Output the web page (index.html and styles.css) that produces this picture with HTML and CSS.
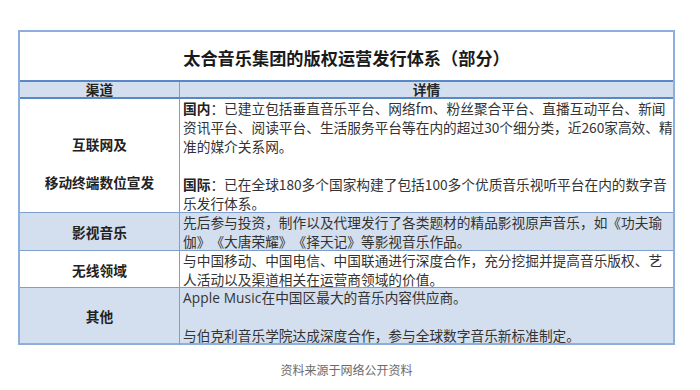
FILE: index.html
```html
<!DOCTYPE html>
<html lang="zh-CN">
<head>
<meta charset="utf-8">
<title>太合音乐集团的版权运营发行体系</title>
<link rel="stylesheet" href="styles.css">
</head>
<body>
<div class="page">
  <div class="sheet">
    <div class="title">太合音乐集团的版权运营发行体系（部分）</div>
    <div class="row head">
      <div class="c1">渠道</div>
      <div class="c2 center">详情</div>
    </div>
    <div class="row r1 white">
      <div class="c1 top">互联网及<br><br>移动终端数位宣发</div>
      <div class="c2"><b>国内</b>：已建立包括垂直音乐平台、网络fm、粉丝聚合平台、直播互动平台、新闻<br>资讯平台、阅读平台、生活服务平台等在内的超过30个细分类，近260家高效、精<br>准的媒介关系网。<br><br><b>国际</b>：已在全球180多个国家构建了包括100多个优质音乐视听平台在内的数字音<br>乐发行体系。</div>
    </div>
    <div class="row r2 blue">
      <div class="c1">影视音乐</div>
      <div class="c2">先后参与投资，制作以及代理发行了各类题材的精品影视原声音乐，如《功夫瑜<br>伽》《大唐荣耀》《择天记》等影视音乐作品。</div>
    </div>
    <div class="row r3 white">
      <div class="c1">无线领域</div>
      <div class="c2">与中国移动、中国电信、中国联通进行深度合作，充分挖掘并提高音乐版权、艺<br>人活动以及渠道相关在运营商领域的价值。</div>
    </div>
    <div class="row r4 blue last">
      <div class="c1">其他</div>
      <div class="c2"><span class="latin">Apple Music</span>在中国区最大的音乐内容供应商。<br><br>与伯克利音乐学院达成深度合作，参与全球数字音乐新标准制定。</div>
    </div>
  </div>
  <div class="source">资料来源于网络公开资料</div>
</div>
</body>
</html>
```

FILE: styles.css
```css
html, body {
  margin: 0;
  padding: 0;
  background: #ffffff;
}

.page {
  width: 700px;
  height: 390px;
  padding: 30px 0 0 18px;
  box-sizing: border-box;
  font-family: "Noto Sans CJK SC", "Noto Sans", sans-serif;
  text-spacing-trim: space-all;
}

.sheet {
  width: 657px;
  box-sizing: border-box;
  border: 2px solid #8eaedb;
  display: flex;
  flex-direction: column;
}

.title {
  height: 48px;
  display: flex;
  align-items: center;
  justify-content: center;
  font-size: 17.2px;
  font-weight: bold;
  color: #1a1a1a;
  padding-top: 2px;
  box-sizing: border-box;
  white-space: nowrap;
}

.row {
  display: grid;
  grid-template-columns: 160px 1fr;
  box-sizing: border-box;
  border-bottom: 1px solid #7d9fd0;
  font-size: 13.7px;
  line-height: 19px;
  color: #333333;
}

.row.last {
  border-bottom: none;
}

.head {
  height: 19px;
  background: #d3dfee;
  border-top: 2px solid #5a87c5;
  border-bottom: 2px solid #5a87c5;
  line-height: 15px;
  font-weight: bold;
  color: #262626;
}

.head .c1, .head .c2 {
  align-items: center;
}

.white { background: #ffffff; }
.blue { background: #d3dfee; }

.r1 { height: 114px; }
.r2 { height: 38px; }
.r3 { height: 37px; }
.r4 { height: 55px; }

.c1 {
  border-right: 1px solid #7d9fd0;
  display: flex;
  align-items: center;
  justify-content: center;
  text-align: center;
  font-weight: bold;
  color: #222222;
  white-space: nowrap;
}

.c1.top {
  align-items: flex-start;
  padding-top: 36px;
}

.c2 {
  padding-left: 3px;
  white-space: nowrap;
}

.c2.center {
  display: flex;
  justify-content: center;
  padding-left: 0;
}

.c2 b {
  font-weight: bold;
  color: #222222;
}

.latin {
  font-family: "Open Sans", "Noto Sans", sans-serif;
  letter-spacing: 0.1px;
}

.source {
  width: 657px;
  margin-top: 17px;
  text-align: center;
  font-size: 12px;
  line-height: 16px;
  color: #6b6b6b;
}
```
